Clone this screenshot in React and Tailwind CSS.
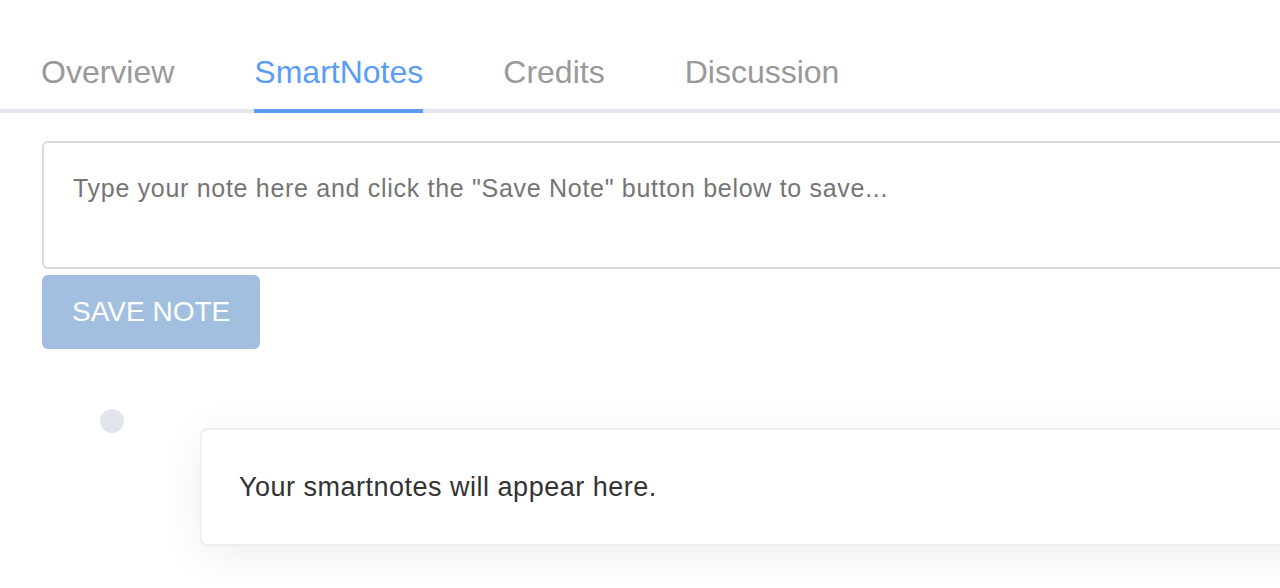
import { useState } from 'react'

const TABS = ['Overview', 'SmartNotes', 'Credits', 'Discussion']

export default function App() {
  const [active, setActive] = useState('SmartNotes')
  const [note, setNote] = useState('')

  return (
    <div className="h-[588px] w-full overflow-hidden bg-white font-['Liberation_Sans',Arial,sans-serif]">
      {/* Tabs */}
      <div className="flex gap-[80px] border-b-4 border-[#e6e7ec] pl-[41px]">
        {TABS.map((tab) => (
          <button
            key={tab}
            onClick={() => setActive(tab)}
            className={
              tab === active
                ? '-mb-1 border-b-4 border-[#5b9df6] pt-[52px] pb-[17px] text-[32px] leading-[40px] text-[#5b9df6]'
                : '-mb-1 border-b-4 border-transparent pt-[52px] pb-[17px] text-[32px] leading-[40px] text-[#999999]'
            }
          >
            {tab}
          </button>
        ))}
      </div>

      {/* Note editor */}
      <div className="ml-[42px] mt-[28px] w-[1300px]">
        <textarea
          value={note}
          onChange={(e) => setNote(e.target.value)}
          placeholder='Type your note here and click the "Save Note" button below to save...'
          className="block h-[128px] w-full resize-none rounded-md border-2 border-[#dadada] pl-[29px] pt-[27px] text-[25px] leading-[36px] tracking-[0.7px] text-[#333] outline-none placeholder:text-[#757575]"
        />
        <button className="mt-[6px] flex h-[74px] w-[218px] items-center rounded-md bg-[#a3bfdf] pl-[30px] text-[28px] uppercase text-white">
          Save Note
        </button>
      </div>

      {/* Notes timeline */}
      <div className="ml-[100px] mt-[60px] flex items-start">
        <div className="h-6 w-6 shrink-0 rounded-full bg-[#e3e5ed]" />
        <div className="ml-[76px] mt-[19px] flex h-[118px] w-[1200px] shrink-0 items-center rounded-lg border-2 border-[#eeeef3] bg-white pl-[37px] shadow-[0_8px_40px_rgba(0,0,0,0.07)]">
          <p className="text-[27px] leading-[40px] tracking-[0.5px] text-[#333]">
            Your smartnotes will appear here.
          </p>
        </div>
      </div>
    </div>
  )
}
